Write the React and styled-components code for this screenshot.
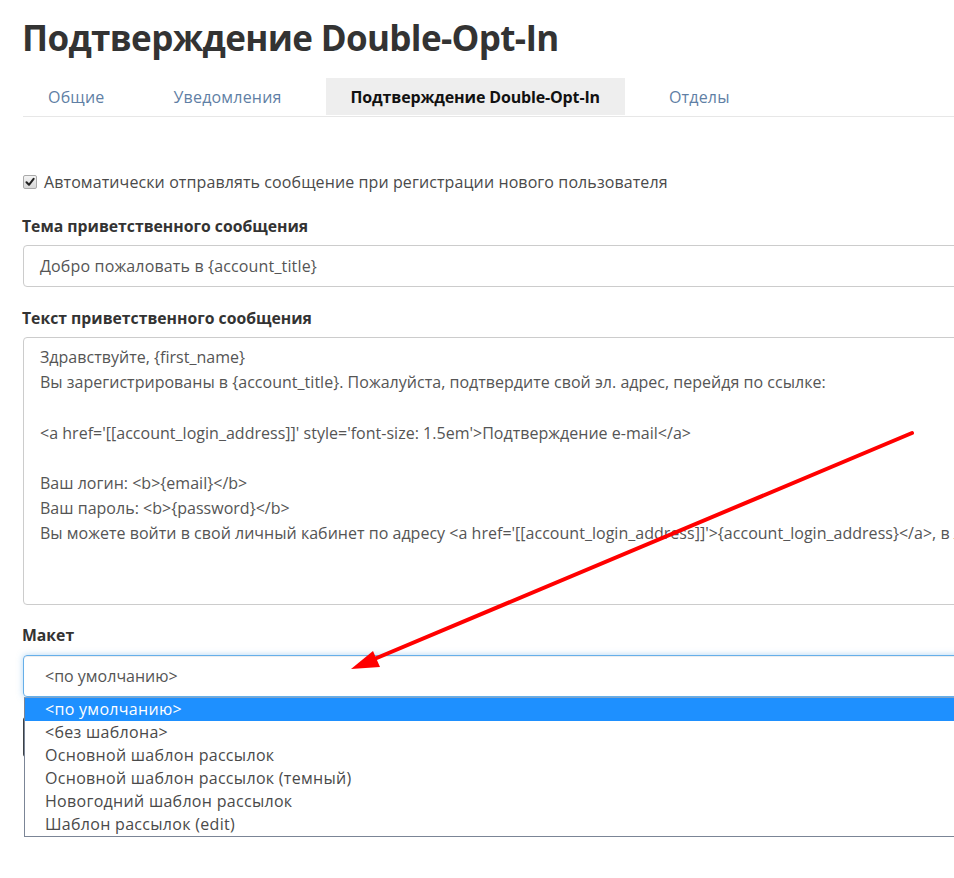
import React from "react";
import styled, { createGlobalStyle } from "styled-components";

const Global = createGlobalStyle`
  html, body { margin: 0; padding: 0; overflow: hidden; background: #fff; }
  body { font-family: "Open Sans", "Liberation Sans", sans-serif; color: #444; }
`;

const Page = styled.div`
  position: relative;
  width: 954px;
  height: 878px;
  overflow: hidden;
`;

const Content = styled.div`
  width: 1200px;
  padding: 18px 0 0 22px;
  display: flex;
  flex-direction: column;
`;

const Title = styled.h1`
  margin: 0;
  font-size: 35px;
  line-height: 40px;
  font-weight: 700;
  color: #333;
  letter-spacing: -0.65px;
`;

const Tabs = styled.nav`
  margin-top: 20px;
  display: flex;
  gap: 19px;
  border-bottom: 1px solid #e7e7e7;
  margin-left: 1px;
`;

const Tab = styled.div`
  height: 37px;
  padding: 0 25px;
  display: flex;
  align-items: center;
  font-size: 16px;
  letter-spacing: ${(p) => (p.$active ? "-0.15px" : "0.2px")};
  font-weight: ${(p) => (p.$active ? 700 : 400)};
  color: ${(p) => (p.$active ? "#111" : "#5f7fa5")};
  background: ${(p) => (p.$active ? "#eeeeee" : "transparent")};
  margin-bottom: 1px;
`;

const CheckRow = styled.label`
  margin-top: 53px;
  height: 24px;
  display: flex;
  align-items: center;
  gap: 7px;
  font-size: 16px;
  letter-spacing: 0.1px;
  color: #4a4a4a;
  padding-left: 1px;
`;

const CheckBox = styled.span`
  width: 12px;
  height: 12px;
  border: 1px solid #a9a9a9;
  border-radius: 2px;
  background: linear-gradient(#f4f4f4, #d8d8d8);
  display: flex;
  align-items: center;
  justify-content: center;
`;

const Label = styled.div`
  margin-top: ${(p) => p.$top}px;
  font-size: 15.75px;
  line-height: 20px;
  font-weight: 700;
  color: #333;
`;

const Field = styled.div`
  margin: 9px 0 0 1px;
  height: 40px;
  border: 1px solid #cccccc;
  border-radius: 4px;
  padding: 0 16px;
  display: flex;
  align-items: center;
  font-size: 16px;
  letter-spacing: 0.15px;
  color: #555;
`;

const TextArea = styled.div`
  margin: 9px 0 0 1px;
  height: 252px;
  border: 1px solid #cccccc;
  border-radius: 4px;
  padding: 7px 16px 7px;
  font-size: 16px;
  letter-spacing: 0.02px;
  line-height: 25.2px;
  color: #555;
  white-space: pre;
  overflow: hidden;
`;

const SelectWrap = styled.div`
  position: relative;
  margin: 10px 0 0 1px;
`;

const Select = styled.div`
  height: 40px;
  border: 1px solid #66afe9;
  border-radius: 4px;
  box-shadow: inset 0 1px 1px rgba(0, 0, 0, 0.075), 0 0 6px rgba(102, 175, 233, 0.5);
  padding: 0 21px;
  display: flex;
  align-items: center;
  font-size: 16px;
  color: #555;
`;

const Options = styled.ul`
  position: absolute;
  left: 1px;
  right: 0;
  top: 42px;
  margin: 0;
  padding: 0;
  list-style: none;
  background: #fff;
  border: 1px solid #7b8596;
  border-top-color: #7fa3c9;
  z-index: 2;
`;

const Option = styled.li`
  height: 23px;
  line-height: 23px;
  padding-left: 20px;
  font-size: 16px;
  letter-spacing: 0.3px;
  color: ${(p) => (p.$selected ? "#fff" : "#4a4a4a")};
  background: ${(p) => (p.$selected ? "#1e90ff" : "transparent")};
`;

const SaveButton = styled.button`
  margin: 20px 0 0 1px;
  width: 120px;
  height: 40px;
  border: none;
  border-radius: 3px;
  background: #3b4046;
  align-self: flex-start;
  padding: 0;
`;

const Overlay = styled.svg`
  position: absolute;
  left: 0;
  top: 0;
  width: 954px;
  height: 878px;
  pointer-events: none;
  z-index: 5;
`;

const messageLines = [
  "Здравствуйте, {first_name}",
  "Вы зарегистрированы в {account_title}. Пожалуйста, подтвердите свой эл. адрес, перейдя по ссылке:",
  "",
  "<a href='[[account_login_address]]' style='font-size: 1.5em'>Подтверждение e-mail</a>",
  "",
  "Ваш логин: <b>{email}</b>",
  "Ваш пароль: <b>{password}</b>",
  "Вы можете войти в свой личный кабинет по адресу <a href='[[account_login_address]]'>{account_login_address}</a>, в любое время.",
];

const templates = [
  "<по умолчанию>",
  "<без шаблона>",
  "Основной шаблон рассылок",
  "Основной шаблон рассылок (темный)",
  "Новогодний шаблон рассылок",
  "Шаблон рассылок (edit)",
];

export default function App() {
  return (
    <Page>
      <Global />
      <Content>
        <Title>Подтверждение Double-Opt-In</Title>
        <Tabs>
          <Tab>Общие</Tab>
          <Tab>Уведомления</Tab>
          <Tab $active>Подтверждение Double-Opt-In</Tab>
          <Tab>Отделы</Tab>
        </Tabs>
        <CheckRow>
          <CheckBox>
            <svg width="10" height="10" viewBox="0 0 10 10">
              <path d="M1.5 5.2 L4 7.8 L8.6 1.8" fill="none" stroke="#222" strokeWidth="2" strokeLinecap="round" strokeLinejoin="round" />
            </svg>
          </CheckBox>
          Автоматически отправлять сообщение при регистрации нового пользователя
        </CheckRow>
        <Label $top={22}>Тема приветственного сообщения</Label>
        <Field>Добро пожаловать в {"{account_title}"}</Field>
        <Label $top={21}>Текст приветственного сообщения</Label>
        <TextArea>{messageLines.join("\n")}</TextArea>
        <Label $top={20}>Макет</Label>
        <SelectWrap>
          <Select>{"<по умолчанию>"}</Select>
          <Options>
            {templates.map((t, i) => (
              <Option key={t} $selected={i === 0}>{t}</Option>
            ))}
          </Options>
        </SelectWrap>
        <SaveButton aria-label="Сохранить" />
      </Content>
      <Overlay viewBox="0 0 954 878">
        <line x1="912" y1="433" x2="372" y2="660" stroke="#f00" strokeWidth="4" strokeLinecap="round" />
        <polygon points="351,669 373,651 380,667" fill="#f00" />
      </Overlay>
    </Page>
  );
}
